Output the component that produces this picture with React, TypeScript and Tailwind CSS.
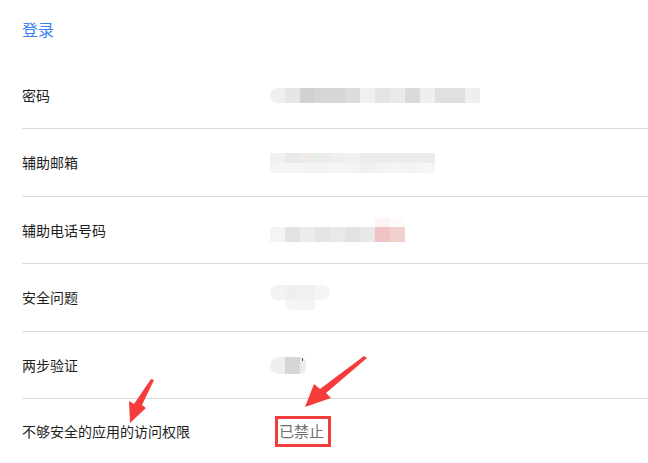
import React from 'react';

const Row: React.FC<{ label: string; h: string; last?: boolean; children?: React.ReactNode }> = ({ label, h, last, children }) => (
  <div className={`ml-[22px] flex items-center ${h} ${last ? '' : 'border-b border-[#dcdcdc]'}`}>
    <div className="w-[248px] text-[14px] text-[#1e1e1e]">{label}</div>
    <div className="flex-1">{children}</div>
  </div>
);

const App: React.FC = () => {
  return (
    <div
      className="relative h-[463px] w-[648px] overflow-hidden bg-white"
      style={{ fontFamily: '"Noto Sans CJK SC", "Noto Sans", sans-serif' }}
    >
      {/* Header */}
      <div className="h-[62px] pl-[22px] pt-[18px] text-[16px] leading-[22px] text-[#3d7ff0]">登录</div>

      <Row label="密码" h="h-[67px]">
        <div className="flex h-[15px]">
          {['#efefef', '#e6e6e6', '#d1d1d1', '#d6d6d6', '#d6d6d6', '#dcdcdc', '#f0f0f0', '#e6e4e2', '#e8eaec', '#dadada', '#eef0ee', '#e0e0e0', '#e0e0e0', '#efefef'].map((c, i) => (
            <div key={i} className={`h-[15px] w-[15px] ${i === 0 ? 'rounded-l-full' : ''}`} style={{ backgroundColor: c }} />
          ))}
        </div>
      </Row>

      <Row label="辅助邮箱" h="h-[68px]">
        <div className="flex flex-col">
          <div className="flex">
            {['#f0f0f0', '#e9e9e9', '#eeebe8', '#e8ecea', '#f0eeec', '#eef0f2', '#ececec', '#ececec', '#ececec', '#ececec', '#ececec'].map((c, i) => (
              <div key={i} className="h-[10px] w-[15px]" style={{ backgroundColor: c }} />
            ))}
          </div>
          <div className="flex">
            {['#f5f5f5', '#f4f5f4', '#f4f4f4', '#f4f4f4', '#f5f5f5', '#f4f4f4', '#f0f0f0', '#f4f4f4', '#f5f5f5', '#f4f4f4', '#f6f6f4'].map((c, i) => (
              <div key={i} className="h-[10px] w-[15px]" style={{ backgroundColor: c }} />
            ))}
          </div>
        </div>
      </Row>

      <Row label="辅助电话号码" h="h-[67px]">
        <div className="flex flex-col">
          <div className="flex pl-[105px]">
            <div className="h-[9px] w-[15px] bg-[#fdf4f4]" />
            <div className="h-[9px] w-[15px] bg-[#fefafa]" />
          </div>
          <div className="flex">
            {['#f4f4f4', '#e2e2e2', '#ececec', '#e4e4e2', '#e8eaea', '#e2e2e2', '#e8e8e8', '#f0c4c4', '#f2d0cc'].map((c, i) => (
              <div key={i} className="h-[15px] w-[15px]" style={{ backgroundColor: c }} />
            ))}
          </div>
        </div>
      </Row>

      <Row label="安全问题" h="h-[68px]">
        <div className="flex flex-col">
          <div className="flex">
            <div className="h-[15px] w-[15px] rounded-l-full bg-[#f3f3f3]" />
            <div className="h-[15px] w-[15px] bg-[#f1efed]" />
            <div className="h-[15px] w-[15px] bg-[#eef0f2]" />
            <div className="h-[15px] w-[15px] rounded-r-full bg-[#f5f5f5]" />
          </div>
          <div className="flex pl-[15px]">
            <div className="h-[10px] w-[15px] rounded-bl-md bg-[#f5f5f5]" />
            <div className="h-[10px] w-[15px] bg-[#f4f4f4]" />
          </div>
        </div>
      </Row>

      <Row label="两步验证" h="h-[67px]">
        <div className="relative flex">
          <div className="h-[17px] w-[15px] rounded-l-full bg-[#efefef]" />
          <div className="h-[17px] w-[15px] bg-[#d6d6d6]" />
          <div className="h-[17px] w-[6px] rounded-r-full bg-[#ececec]" />
          <div className="absolute left-[32px] top-[1px] h-[3px] w-[1px] bg-[#555]" />
        </div>
      </Row>

      <Row label="不够安全的应用的访问权限" h="h-[65px]" last>
        <div className="ml-[5px] inline-flex h-[31px] w-[56px] items-center border-[3px] border-[#f33c3c] pl-[1px] text-[15px] text-[#707070]">
          已禁止
        </div>
      </Row>

      {/* annotation arrows */}
      <svg className="pointer-events-none absolute left-0 top-0" width="648" height="463">
        <polygon points="154,380 142,405 146,408 130,423 129,401 134,404 151,379" fill="#f63b3b" />
        <polygon points="367,358 326,393 331,398 305,407 314,384 320,389 364,356" fill="#f63b3b" />
      </svg>
    </div>
  );
};

export default App;
